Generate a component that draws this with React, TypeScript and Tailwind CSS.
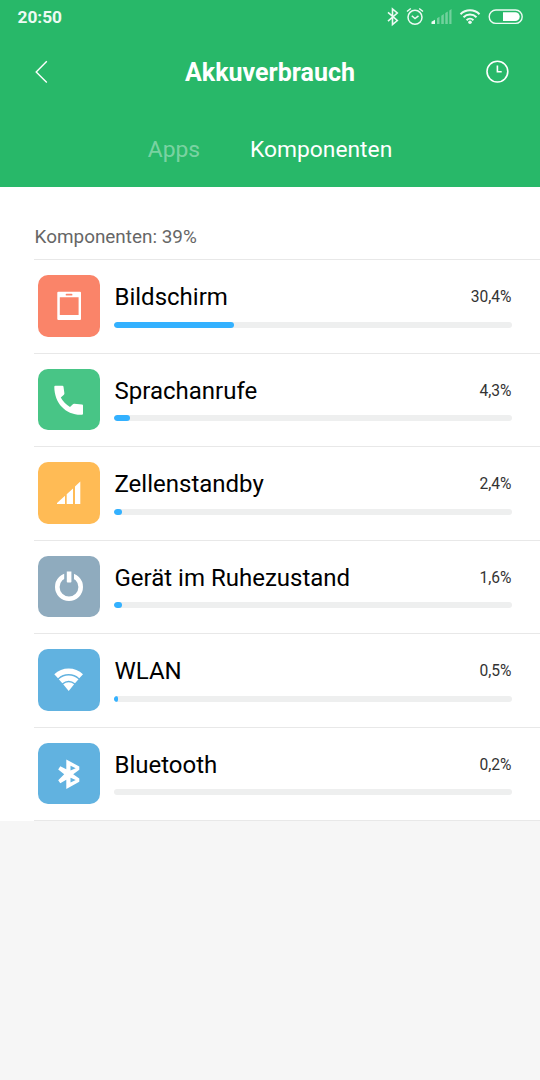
import type { ReactNode } from "react";

type Item = { name: string; value: string; fill: number; color: string; icon: ReactNode };

const items: Item[] = [
  {
    name: "Bildschirm",
    value: "30,4%",
    fill: 119.5,
    color: "bg-[#fa8469]",
    icon: (
      <path
        fillRule="evenodd"
        d="M20.3 16.7H42a1 1 0 0 1 1 1V44a1 1 0 0 1-1 1H20.3a1 1 0 0 1-1-1V17.7a1 1 0 0 1 1-1ZM21.8 22.3V40H40.6V22.3ZM28.6 18.7a.9.9 0 0 0 0 1.9h4.9a.9.9 0 0 0 0-1.9Z"
      />
    ),
  },
  {
    name: "Sprachanrufe",
    value: "4,3%",
    fill: 16,
    color: "bg-[#48c586]",
    icon: (
      <path
        d="M17.3 16.8H24.4q1 0 1.1 1L26.4 24.2q.1.9-.5 1.5L22.8 28.6Q26 34.6 32 37.9L34.9 35.2q.5-.6 1.3-.5L44 35.6q1 .1 1 1V44.8q0 1-1 1C28 46.500 16.300 34.500 16.300 17.800q0-1 1-1Z"
      />
    ),
  },
  {
    name: "Zellenstandby",
    value: "2,4%",
    fill: 8,
    color: "bg-[#ffbb55]",
    icon: <path d="M19 42v-1l8-7.3V42ZM28.7 42V32.2L35 26.4V42ZM37 42V24.5l5.3-5V42Z" />,
  },
  {
    name: "Gerät im Ruhezustand",
    value: "1,6%",
    fill: 8,
    color: "bg-[#8fabbe]",
    icon: (
      <>
        <circle cx="31" cy="31" r="11.7" fill="none" stroke="white" strokeWidth="4.6" />
        <path d="M26.2 14h9.8v13h-9.8Z" fill="#8fabbe" />
        <path d="M28.8 15.5h4.6v10.2a.8.8 0 0 1-.8.8h-3a.8.8 0 0 1-.8-.8Z" />
      </>
    ),
  },
  {
    name: "WLAN",
    value: "0,5%",
    fill: 4,
    color: "bg-[#61b2e0]",
    icon: (
      <>
        <path d="M16.3 25.2a21 21 0 0 1 28.7 0l-3.7 4.1a15.6 15.6 0 0 0-21.3 0Z" />
        <path d="M20.8 30.3a14.6 14.6 0 0 1 19.7 0l-3.5 4a9.2 9.2 0 0 0-12.7 0Z" />
        <path d="M25.2 35.2a8.2 8.2 0 0 1 10.9 0L30.7 42Z" />
      </>
    ),
  },
  {
    name: "Bluetooth",
    value: "0,2%",
    fill: 0,
    color: "bg-[#61b2e0]",
    icon: (
      <path
        fillRule="evenodd"
        d="M28.300 16.500L41.300 23.500V26.800L35.200 31.200L41.300 35.500V38.800L28.300 46V36.800L22.300 40.300L20.200 37.200L26.200 31.200L20.200 26.500L22.300 23.300L28.300 26.200ZM32.500 22.800V27.600L37.700 25.300ZM32.500 34.700V39.500L37.700 37Z"
      />
    ),
  },
];

function StatusIcons() {
  return (
    <svg width="138" height="24" viewBox="386 5 138 24" fill="none" stroke="#edfaf3">
      <path d="M388 12.3l9.3 8.2-4.8 4V9l4.8 4-9.3 8.2" strokeWidth="1.6" />
      <circle cx="415" cy="17.3" r="7" strokeWidth="1.5" />
      <path d="M411.8 15.8l3.2 2.8 3.5-2.8M407 11.5l3.8-3M423 11.5l-3.8-3" strokeWidth="1.5" />
      <g stroke="none" fill="#edfaf3">
        <path d="M431.5 24v-2.2l3.5-2V24Z" />
        <g opacity=".38">
          <path d="M437 18.2l2.5-1.5V24H437ZM441.3 15.8l2.5-1.7V24h-2.5ZM445.3 13l2.5-1.6V24h-2.5ZM449.3 10.6l2.2-1.6V24h-2.2Z" />
        </g>
        <circle cx="470" cy="22.3" r="1.8" />
      </g>
      <path d="M460.5 14.2a13.5 13.5 0 0 1 19 0M463.5 17.3a9.2 9.2 0 0 1 13 0M466.6 20.2a4.9 4.9 0 0 1 6.8 0" strokeWidth="2" />
      <rect x="489.2" y="10" width="33" height="13.4" rx="6.7" strokeWidth="1.4" />
      <path d="M503 12.3h12.3a4.4 4.4 0 0 1 4.4 4.4 4.4 4.4 0 0 1-4.4 4.4H503Z" stroke="none" fill="white" />
    </svg>
  );
}

export default function App() {
  return (
    <div className="min-h-[1080px] w-[540px] bg-[#f6f6f6] font-[Roboto,sans-serif]">
      <header className="flex h-[187px] flex-col bg-[#28b869] text-white">
        <div className="flex h-[34px] items-center justify-between pr-4 pl-[17.5px]">
          <span className="pt-px text-[17.3px] font-bold text-[#edfaf3]">20:50</span>
          <StatusIcons />
        </div>
        <div className="flex h-[76px] items-center justify-between pr-[31px] pl-[34px]">
          <svg width="24" height="24" viewBox="0 0 24 24" fill="none" stroke="white" strokeWidth="1.4">
            <path d="M12.8 1.3 2.2 12l10.6 10.4" />
          </svg>
          <h1 className="mr-[3px] text-[25px] leading-none font-bold">Akkuverbrauch</h1>
          <svg width="24" height="24" viewBox="0 0 24 24" fill="none" stroke="white" strokeWidth="1.6">
            <circle cx="12.4" cy="11.6" r="10.4" />
            <path d="M12.4 5.5v6.2h4.3" />
          </svg>
        </div>
        <nav className="flex h-[77px] justify-center gap-[50px] pt-[25px] text-[22.8px] leading-[29px]">
          <span className="text-white/40">Apps</span>
          <span>Komponenten</span>
        </nav>
      </header>
      <main className="bg-white pt-[36px] pl-[34px]">
        <h2 className="h-[36px] pl-[0.6px] text-[18.9px] leading-[28px] text-[#666]">Komponenten: 39%</h2>
        <ul className="border-b border-[#e8e8e8]">
          {items.map((item) => (
            <li key={item.name} className="flex h-[93.5px] border-t border-[#e8e8e8] pt-[15.2px] pr-7 pl-1">
              <div className={`size-[61.7px] shrink-0 rounded-[10px] ${item.color}`}>
                <svg width="62" height="62" viewBox="0 0 62 62" fill="white">
                  {item.icon}
                </svg>
              </div>
              <div className="ml-[14.8px] flex-1 pt-[7.2px]">
                <div className="flex h-[30px] items-center justify-between">
                  <span className="text-[24px] text-black">{item.name}</span>
                  <span className="pt-px pr-[0.5px] text-[15.6px] text-[#333]">{item.value}</span>
                </div>
                <div className="mt-[9.6px] h-[6px] overflow-hidden rounded-full bg-[#eeefef]">
                  <div className="h-full rounded-full bg-[#33b1ff]" style={{ width: item.fill }} />
                </div>
              </div>
            </li>
          ))}
        </ul>
      </main>
    </div>
  );
}
